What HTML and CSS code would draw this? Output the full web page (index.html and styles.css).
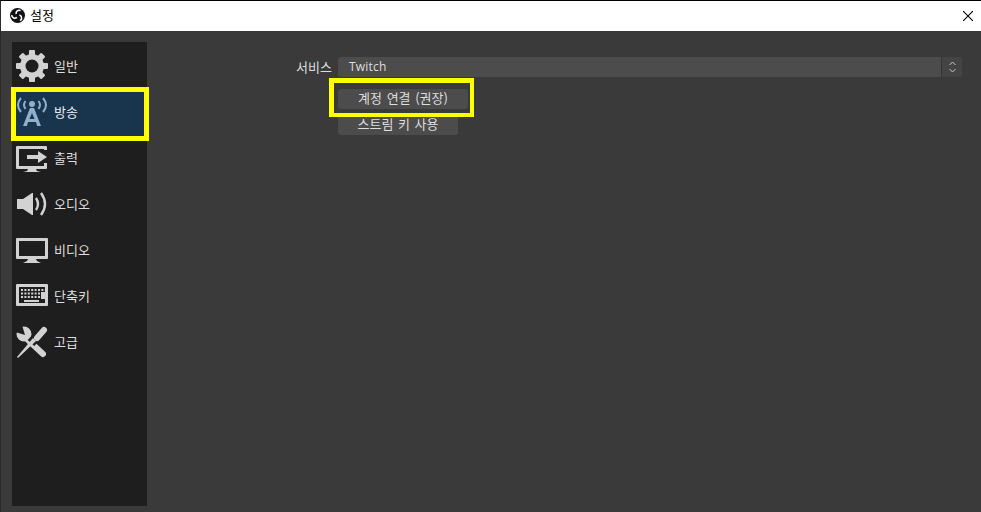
FILE: index.html
```html
<!DOCTYPE html>
<html lang="ko">
<head>
  <meta charset="UTF-8" />
  <title>설정</title>
  <link rel="stylesheet" href="styles.css">
</head>
<body>
  <header class="titlebar">
    <svg class="app-icon" viewBox="0 0 16 16" width="15" height="15">
      <circle cx="8" cy="8" r="8" fill="#111"/>
      <g fill="none" stroke="#fff" stroke-width="1.7">
        <path d="M6.6 6.4C6 3.6 8.6 1.6 11.4 2.8"/>
        <path d="M6.6 6.4C6 3.6 8.6 1.6 11.4 2.8" transform="rotate(120 8 8)"/>
        <path d="M6.6 6.4C6 3.6 8.6 1.6 11.4 2.8" transform="rotate(240 8 8)"/>
      </g>
    </svg>
    <span class="title">설정</span>
    <svg class="close" viewBox="0 0 10 10" width="10" height="10">
      <path d="M0 0L10 10M10 0L0 10" stroke="#000" stroke-width="1.1" fill="none"/>
    </svg>
  </header>

  <div class="window">
    <aside class="sidebar">
      <div class="item">
        <svg class="icon" viewBox="0 0 32 32">
          <g fill="#d2d2d2">
            <rect x="13" y="0" width="6" height="32" rx="1"/>
            <rect x="13" y="0" width="6" height="32" rx="1" transform="rotate(45 16 16)"/>
            <rect x="13" y="0" width="6" height="32" rx="1" transform="rotate(90 16 16)"/>
            <rect x="13" y="0" width="6" height="32" rx="1" transform="rotate(135 16 16)"/>
            <circle cx="16" cy="16" r="12"/>
          </g>
          <circle cx="16" cy="16" r="6.5" fill="#1e1e1e"/>
        </svg>
        <span>일반</span>
      </div>
      <div class="item selected">
        <svg class="icon" viewBox="0 0 32 32">
          <g fill="none" stroke="#8fb0cc" stroke-width="2">
            <path d="M5 2Q-1 9 5 16"/>
            <path d="M9.5 5Q6.5 9 9.5 13"/>
            <path d="M27 2Q33 9 27 16"/>
            <path d="M22.5 5Q25.5 9 22.5 13"/>
          </g>
          <circle cx="16" cy="8" r="3" fill="#8fb0cc"/>
          <path fill="#8fb0cc" fill-rule="evenodd" d="M14 12h4l7 18h-4l-1-4h-8l-1 4H7zM16 17l-2.500 6h5z"/>
        </svg>
        <span>방송</span>
        <div class="mark mark-side"></div>
      </div>
      <div class="item">
        <svg class="icon" viewBox="0 0 32 32">
          <path fill="#d2d2d2" d="M1 4h29a1 1 0 0 1 1 1v3h-3V7H3v17h25v-3h3v5a1 1 0 0 1-1 1H1a1 1 0 0 1-1-1V5a1 1 0 0 1 1-1zM12 27h8l1 2 4 1H7l4-1z"/>
          <path fill="#d2d2d2" d="M11 13h11V9l9 6-9 6v-4H11z"/>
        </svg>
        <span>출력</span>
      </div>
      <div class="item">
        <svg class="icon" viewBox="0 0 32 32">
          <path fill="#d2d2d2" d="M1 11h6l9-6h1v22h-1l-9-6H1z"/>
          <g fill="none" stroke="#d2d2d2" stroke-width="2.400">
            <path d="M20 10Q24 16 20 22"/>
            <path d="M25 5Q33 16 25 27"/>
          </g>
        </svg>
        <span>오디오</span>
      </div>
      <div class="item">
        <svg class="icon" viewBox="0 0 32 32">
          <path fill="#d2d2d2" fill-rule="evenodd" d="M1 4h30a1 1 0 0 1 1 1v19a1 1 0 0 1-1 1H1a1 1 0 0 1-1-1V5a1 1 0 0 1 1-1zM3 7v15h26V7zM12 25h8l1 2 4 2H7l4-2z"/>
        </svg>
        <span>비디오</span>
      </div>
      <div class="item">
        <svg class="icon" viewBox="0 0 32 32">
          <path fill="#d2d2d2" fill-rule="evenodd" d="M1 4h30a1 1 0 0 1 1 1v20a1 1 0 0 1-1 1H1a1 1 0 0 1-1-1V5a1 1 0 0 1 1-1zM3 7v16h26V7z"/>
          <path stroke="#d2d2d2" stroke-width="2" stroke-dasharray="2 1.400" d="M5 10h24M5 13.500h19M5 17h19"/>
          <path fill="#d2d2d2" d="M8 20h15v2H8zM25 12h4v7h-4z"/>
        </svg>
        <span>단축키</span>
      </div>
      <div class="item">
        <svg class="icon" viewBox="0 0 32 32">
          <path stroke="#d2d2d2" stroke-width="6" stroke-linecap="round" d="M12 14L27 28"/>
          <circle cx="8" cy="8" r="7.500" fill="#d2d2d2"/>
          <path fill="#1e1e1e" d="M9 9L-1 6V-1H6z"/>
          <path stroke="#1e1e1e" stroke-width="9" d="M28 3L15 17"/>
          <path stroke="#d2d2d2" stroke-width="6" stroke-linecap="round" d="M28 4L21 12"/>
          <path fill="#d2d2d2" d="M17 12L20 15L2 32L1 31z"/>
        </svg>
        <span>고급</span>
      </div>
    </aside>

    <main class="settings">
      <div class="row">
        <label class="row-label">서비스</label>
        <div class="select">
          <span class="select-value">Twitch</span>
          <span class="select-arrows">
            <svg viewBox="0 0 7 12" width="7" height="12"><path d="M0.500 4L3.500 1L6.500 4M0.500 8L3.500 11L6.500 8" stroke="#c8c8c8" fill="none"/></svg>
          </span>
        </div>
      </div>
      <div class="buttons">
        <button class="btn btn-wide">계정 연결 (권장)</button>
        <button class="btn">스트림 키 사용</button>
        <div class="mark mark-btn"></div>
      </div>
    </main>
  </div>
</body>
</html>
```

FILE: styles.css
```css
html, body {
  margin: 0;
  height: 100%;
}
body {
  font-family: "Noto Sans CJK KR", "Noto Sans", sans-serif;
  font-size: 13px;
  background-color: #3a3a3a;
  color: #dedede;
  border-top: 1px solid #000;
  border-left: 1px solid #2a2a2a;
  box-sizing: border-box;
  overflow: hidden;
}
.titlebar {
  height: 30px;
  box-sizing: border-box;
  background-color: #fff;
  color: #000;
  display: flex;
  align-items: center;
  padding: 0 8px 1px 9px;
}
.title {
  margin: 0 0 2px 5px;
}
.close {
  margin-left: auto;
}
.window {
  display: flex;
  padding: 11px 0 0 11px;
}
.sidebar {
  width: 135px;
  height: 464px;
  background-color: #1e1e1e;
  padding-top: 1px;
  box-sizing: border-box;
}
.item {
  height: 46px;
  display: flex;
  align-items: center;
  padding-left: 4px;
  gap: 6px;
  box-sizing: border-box;
}
.item span {
  margin-bottom: 2px;
}
.item.selected {
  position: relative;
  background-color: #19344d;
  box-shadow: 0 1px 0 #19344d;
  color: #e8eef4;
}
.icon {
  width: 32px;
  height: 32px;
}
.settings {
  flex: 1;
  padding: 15px 19px 0 0;
  display: flex;
  flex-direction: column;
}
.row {
  display: flex;
  align-items: center;
  height: 20px;
  margin-left: 149px;
}
.row-label {
  width: 42px;
  margin-bottom: 2px;
}
.select {
  flex: 1;
  height: 20px;
  background-color: #4c4c4c;
  border-radius: 3px;
  display: flex;
  align-items: center;
  justify-content: space-between;
}
.select-value {
  font-family: "Open Sans", sans-serif;
  font-size: 12px;
  letter-spacing: 0.2px;
  padding: 0 0 2px 11px;
}
.select-arrows {
  width: 20px;
  height: 20px;
  background-color: #444;
  border-left: 1px solid #333;
  border-radius: 0 3px 3px 0;
  display: flex;
  align-items: center;
  justify-content: center;
}
.buttons {
  position: relative;
  margin: 12px 0 0 191px;
  display: flex;
  flex-direction: column;
  gap: 6px;
  align-items: flex-start;
}
.btn {
  font-family: inherit;
  font-size: 13px;
  color: #dedede;
  width: 120px;
  height: 20px;
  padding: 0 0 2px;
  line-height: 18px;
  word-spacing: 1px;
  border: none;
  border-radius: 3px;
  background-color: #4c4c4c;
}
.btn-wide {
  width: 130px;
}
.mark {
  position: absolute;
  border: 5px solid #ffff00;
}
.mark-side {
  left: -1px;
  top: -2px;
  width: 128px;
  height: 44px;
}
.mark-btn {
  left: -9px;
  top: -11px;
  width: 136px;
  height: 30px;
  border-right-width: 4px;
  border-bottom-width: 4px;
}
```
